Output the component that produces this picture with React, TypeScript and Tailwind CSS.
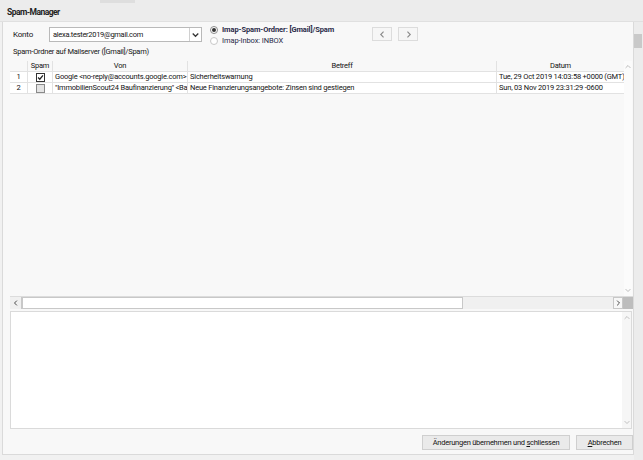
import React from "react";

const Chevron = ({ dir, size = 6, color = "#606060", sw = 1.4 }: { dir: "up" | "down" | "left" | "right"; size?: number; color?: string; sw?: number }) => {
  const pts: Record<string, string> = {
    up: "1,6.5 5,2.5 9,6.5",
    down: "1,3.5 5,7.5 9,3.5",
    left: "6.5,1 2.5,5 6.5,9",
    right: "3.5,1 7.5,5 3.5,9",
  };
  return (
    <svg width={size} height={size} viewBox="0 0 10 10" className="block">
      <polyline points={pts[dir]} fill="none" stroke={color} strokeWidth={sw} />
    </svg>
  );
};

const Check = () => (
  <svg width="7" height="7" viewBox="0 0 10 10" className="block">
    <polyline points="1.5,5 4,7.5 8.5,2" fill="none" stroke="#222" strokeWidth="1.8" />
  </svg>
);

const rows = [
  {
    n: "1",
    spam: true,
    von: "Google <no-reply@accounts.google.com>",
    betreff: "Sicherheitswarnung",
    datum: "Tue, 29 Oct 2019 14:03:58 +0000 (GMT)",
  },
  {
    n: "2",
    spam: false,
    von: "\"ImmobilienScout24 Baufinanzierung\" <Baufinanzierung@immobilienscout24.de>",
    betreff: "Neue Finanzierungsangebote: Zinsen sind gestiegen",
    datum: "Sun, 03 Nov 2019 23:31:29 -0600",
  },
];

export default function App() {
  return (
    <div className="w-[643px] h-[460px] overflow-hidden bg-[#f1f1f1] flex flex-col text-[7.5px] tracking-[-0.25px] leading-none text-[#141414] font-['Roboto','Liberation_Sans',Arial,sans-serif]">
      {/* top strip */}
      <div className="h-[3px] flex bg-[#ececec]">
        <div className="w-[100px]" />
        <div className="w-[35px] bg-[#dedede]" />
      </div>
      {/* title bar */}
      <div className="h-[19px] bg-[#ececec] border-b border-[#e0e0e0] pl-[7px] flex items-center font-bold text-[8.5px] tracking-[-0.55px] text-[#222]">
        Spam-Manager
      </div>
      <div className="flex-1 flex">
        {/* dialog */}
        <div className="w-[632px] ml-[2px] mb-[5px] border-l border-r border-b border-[#dadada] bg-[#f8f8f8] flex flex-col pl-[7px] pt-[5px]">
          {/* row 1 */}
          <div className="h-[19px] flex items-start">
            <div className="w-[39px] pl-[3px] h-[15px] flex items-center text-[8px] tracking-[-0.2px]">Konto</div>
            <div className="w-[153px] h-[15px] bg-white border border-[#b9b9b9] flex items-center">
              <div className="flex-1 pl-[3px] text-[7.5px] tracking-[-0.3px]">alexa.tester2019@gmail.com</div>
              <div className="w-[12px] h-full border-l border-[#d0d0d0] flex items-center justify-center">
                <Chevron dir="down" size={7} color="#333" sw={1.8} />
              </div>
            </div>
            <div className="w-[162px] ml-[8px] -mt-[1px] flex flex-col gap-[3px] text-[#2a2a48] tracking-[-0.1px]">
              <div className="flex items-center h-[8px]">
                <div className="w-[8px] h-[8px] rounded-full border border-[#8a8a8a] bg-white flex items-center justify-center">
                  <div className="w-[4px] h-[4px] rounded-full bg-[#333]" />
                </div>
                <span className="ml-[4px] font-bold">Imap-Spam-Ordner: [Gmail]/Spam</span>
              </div>
              <div className="flex items-center h-[8px]">
                <div className="w-[8px] h-[8px] rounded-full border border-[#c8c8c8] bg-white" />
                <span className="ml-[4px]">Imap-Inbox: INBOX</span>
              </div>
            </div>
            <div className="flex gap-[6px]">
              <div className="w-[20px] h-[14px] border border-[#dcdcdc] bg-[#f6f6f6] flex items-center justify-center">
                <Chevron dir="left" size={7} color="#8a8a8a" sw={1.6} />
              </div>
              <div className="w-[20px] h-[14px] border border-[#dcdcdc] bg-[#f6f6f6] flex items-center justify-center">
                <Chevron dir="right" size={7} color="#8a8a8a" sw={1.6} />
              </div>
            </div>
          </div>
          {/* label */}
          <div className="h-[12px] pl-[3px] flex items-center">Spam-Ordner auf Mailserver ([Gmail]/Spam)</div>
          {/* table */}
          <div className="mt-[3px] h-[235px] flex">
            <div className="w-[614px] flex flex-col">
              <div className="h-[11px] grid grid-cols-[18px_25px_135px_309px_127px] border-b border-[#e2e2e2]">
                <div className="border-r border-[#e2e2e2]" />
                <div className="border-r border-[#e2e2e2] flex items-center justify-center">Spam</div>
                <div className="border-r border-[#e2e2e2] flex items-center justify-center">Von</div>
                <div className="border-r border-[#e2e2e2] flex items-center justify-center">Betreff</div>
                <div className="flex items-center justify-center">Datum</div>
              </div>
              {rows.map((r) => (
                <div key={r.n} className="h-[11px] grid grid-cols-[18px_25px_135px_309px_127px] border-b border-[#e2e2e2] bg-white tracking-[-0.2px]">
                  <div className="flex items-center justify-center border-r border-[#e2e2e2]">{r.n}</div>
                  <div className="border-r border-[#e2e2e2] flex items-center justify-center">
                    {r.spam ? (
                      <div className="w-[9px] h-[9px] border border-[#333] bg-white flex items-center justify-center">
                        <Check />
                      </div>
                    ) : (
                      <div className="w-[9px] h-[9px] border border-[#8a8a8a] bg-[#e4e4e4]" />
                    )}
                  </div>
                  <div className="border-r border-[#e2e2e2] pl-[2px] flex items-center overflow-hidden whitespace-nowrap">{r.von}</div>
                  <div className="border-r border-[#e2e2e2] pl-[2px] flex items-center overflow-hidden whitespace-nowrap">{r.betreff}</div>
                  <div className="pl-[2px] flex items-center overflow-hidden whitespace-nowrap">{r.datum}</div>
                </div>
              ))}
            </div>
            <div className="w-[8px] bg-[#fbfbfb] flex flex-col items-center justify-between py-[3px]">
              <Chevron dir="up" size={6} color="#b0b0b0" sw={1.4} />
              <Chevron dir="down" size={6} color="#b0b0b0" sw={1.4} />
            </div>
          </div>
          {/* horizontal scrollbar */}
          <div className="h-[13px] flex border-t border-[#dcdcdc] bg-[#f0f0f0]">
            <div className="w-[12px] border-r border-[#c8c8c8] flex items-center justify-center">
              <Chevron dir="left" size={6} color="#444" sw={1.6} />
            </div>
            <div className="w-[441px] bg-white border border-[#c8c8c8]" />
            <div className="flex-1" />
            <div className="w-[10px] border border-[#c8c8c8] bg-[#f7f7f7] flex items-center justify-center">
              <Chevron dir="right" size={6} color="#444" sw={1.6} />
            </div>
            <div className="w-[10px] bg-[#bdbdbd]" />
          </div>
          {/* text area */}
          <div className="mt-[2px] h-[118px] mr-[1px] border border-[#dadada] bg-white flex">
            <div className="flex-1" />
            <div className="w-[9px] bg-[#f6f6f6] flex flex-col items-center justify-between py-[3px]">
              <Chevron dir="up" size={6} color="#b5b5b5" sw={1.4} />
              <Chevron dir="down" size={6} color="#b5b5b5" sw={1.4} />
            </div>
          </div>
          {/* buttons */}
          <div className="mt-[6px] h-[15px] flex justify-end gap-[6px]">
            <div className="w-[148px] h-[15px] border border-[#cfcfcf] bg-[#eaeaea] flex items-center justify-center">
              <span>
                Änderungen übernehmen und <span className="underline">s</span>chliessen
              </span>
            </div>
            <div className="w-[57px] h-[15px] border border-[#cfcfcf] bg-[#eaeaea] flex items-center justify-center">
              <span>
                <span className="underline">A</span>bbrechen
              </span>
            </div>
          </div>
        </div>
        {/* right strip (background window) */}
        <div className="flex-1 flex flex-col bg-[#ececec]">
          <div className="h-[12px]" />
          <div className="h-[14px] w-[8px] bg-[#c9c9c9]" />
        </div>
      </div>
    </div>
  );
}
